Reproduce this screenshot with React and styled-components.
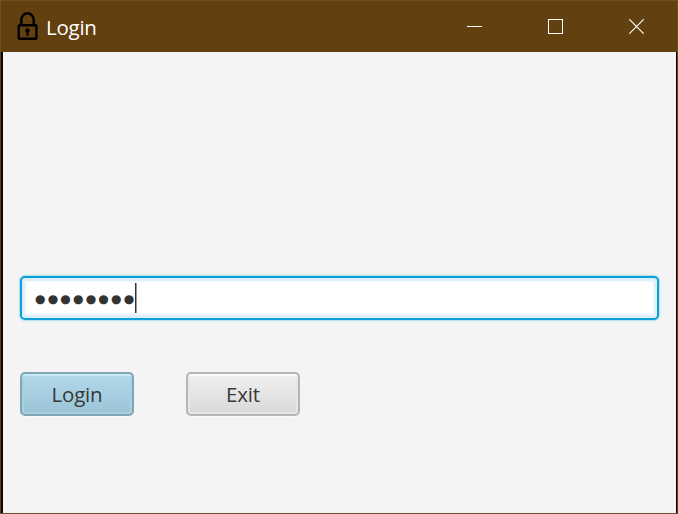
import React from "react";
import styled, { createGlobalStyle } from "styled-components";

const GlobalStyle = createGlobalStyle`
  * { box-sizing: border-box; }
  body { margin: 0; background: #f4f4f4; }
`;

const Window = styled.div`
  width: 678px;
  height: 514px;
  display: flex;
  flex-direction: column;
  overflow: hidden;
  border-bottom: 1px solid #6b5130;
  background: #63400f;
  font-family: "Open Sans", "Noto Sans", sans-serif;
`;

const TitleBar = styled.header`
  flex: none;
  height: 52px;
  display: flex;
  align-items: center;
  border: solid #714f24;
  border-width: 1px 1px 0;
  padding: 0 0 0 16px;
  color: #fff;
`;

const LockIcon = styled.svg`
  flex: none;
  width: 22px;
  height: 30px;
  margin-bottom: 2px;
  display: block;
`;

const Title = styled.h1`
  flex: 1;
  margin: 0 0 0 7px;
  padding-top: 1px;
  font-size: 20.5px;
  line-height: 28px;
  font-weight: 400;
  letter-spacing: -0.25px;
`;

const WindowButton = styled.button`
  flex: none;
  width: 81px;
  height: 51px;
  padding: 0;
  border: 0;
  background: transparent;
  display: flex;
  align-items: center;
  justify-content: center;
  svg { display: block; }
`;

const Content = styled.main`
  flex: 1;
  margin: 0 1px;
  border: solid #080808;
  border-width: 0 1px 0 2px;
  background: #f4f4f4;
  padding: 224px 17px 0;
`;

const PasswordField = styled.div`
  height: 44px;
  display: flex;
  align-items: center;
  padding: 0 0 1px 13px;
  border: 2px solid #0b9fd6;
  border-radius: 5px;
  background: #fff;
  box-shadow: 0 0 0 1px #b9e2f1, 0 0 2px 1px #c9e8f4, inset 0 0 0 3px #def1f9, inset 0 0 1px 4px #f0f9fc;
`;

const Mask = styled.span`
  width: 100px;
  padding-top: 2px;
  font-family: "DejaVu Sans", sans-serif;
  font-size: 12px;
  line-height: 30px;
  letter-spacing: 2.2px;
  white-space: nowrap;
  color: #333;
`;

const Caret = styled.span`
  width: 2px;
  height: 30px;
  background: linear-gradient(90deg, #333 50%, #999 50%);
`;

const Actions = styled.div`
  display: flex;
  gap: 52px;
  margin-top: 52px;
`;

const Button = styled.button`
  width: 114px;
  height: 44px;
  padding: 0 0 1px;
  border: 2px solid ${(p) => (p.$primary ? "#83a6b6" : "#b5b5b5")};
  border-radius: 5px;
  background: ${(p) =>
    p.$primary
      ? "linear-gradient(#b3daea, #9ac3d7)"
      : "linear-gradient(#f0f0f0, #d9d9d9)"};
  box-shadow: 0 1px 0 #fafafa,
    inset 0 2px 0 ${(p) => (p.$primary ? "#c7e7f3" : "#fbfbfb")},
    inset 0 0 0 2px ${(p) => (p.$primary ? "#a9d0e1" : "#e6e6e6")};
  color: #383838;
  font: 400 20.5px/28px "Open Sans", "Noto Sans", sans-serif;
  letter-spacing: -0.2px;
`;

export default function App() {
  return (
    <Window>
      <GlobalStyle />
      <TitleBar>
        <LockIcon viewBox="0 0 22 30" aria-hidden="true">
          <path d="M4.3 14V9a6.2 6.7 0 0 1 12.4 0v5" fill="none" stroke="#000" strokeWidth="2.5" />
          <rect x="1.7" y="14.3" width="17.7" height="13.5" rx=".8" fill="none" stroke="#000" strokeWidth="2.4" />
          <circle cx="10.5" cy="19.5" r="2.3" />
          <path d="M9.7 20h1.6l.5 4.7H9.2z" />
        </LockIcon>
        <Title>Login</Title>
        <WindowButton aria-label="Minimize">
          <svg width="15" height="15" viewBox="0 0 15 15"><path d="M0 7.5h15" stroke="#fff" /></svg>
        </WindowButton>
        <WindowButton aria-label="Maximize">
          <svg width="15" height="15" viewBox="0 0 15 15"><rect x=".5" y=".5" width="14" height="14" fill="none" stroke="#fff" /></svg>
        </WindowButton>
        <WindowButton aria-label="Close">
          <svg width="15" height="15" viewBox="0 0 15 15"><path d="M.3.3l14.4 14.4M14.7.3L.3 14.7" stroke="#fff" strokeWidth="1.15" /></svg>
        </WindowButton>
      </TitleBar>
      <Content>
        <PasswordField>
          <Mask>●●●●●●●●</Mask>
          <Caret />
        </PasswordField>
        <Actions>
          <Button $primary>Login</Button>
          <Button>Exit</Button>
        </Actions>
      </Content>
    </Window>
  );
}
